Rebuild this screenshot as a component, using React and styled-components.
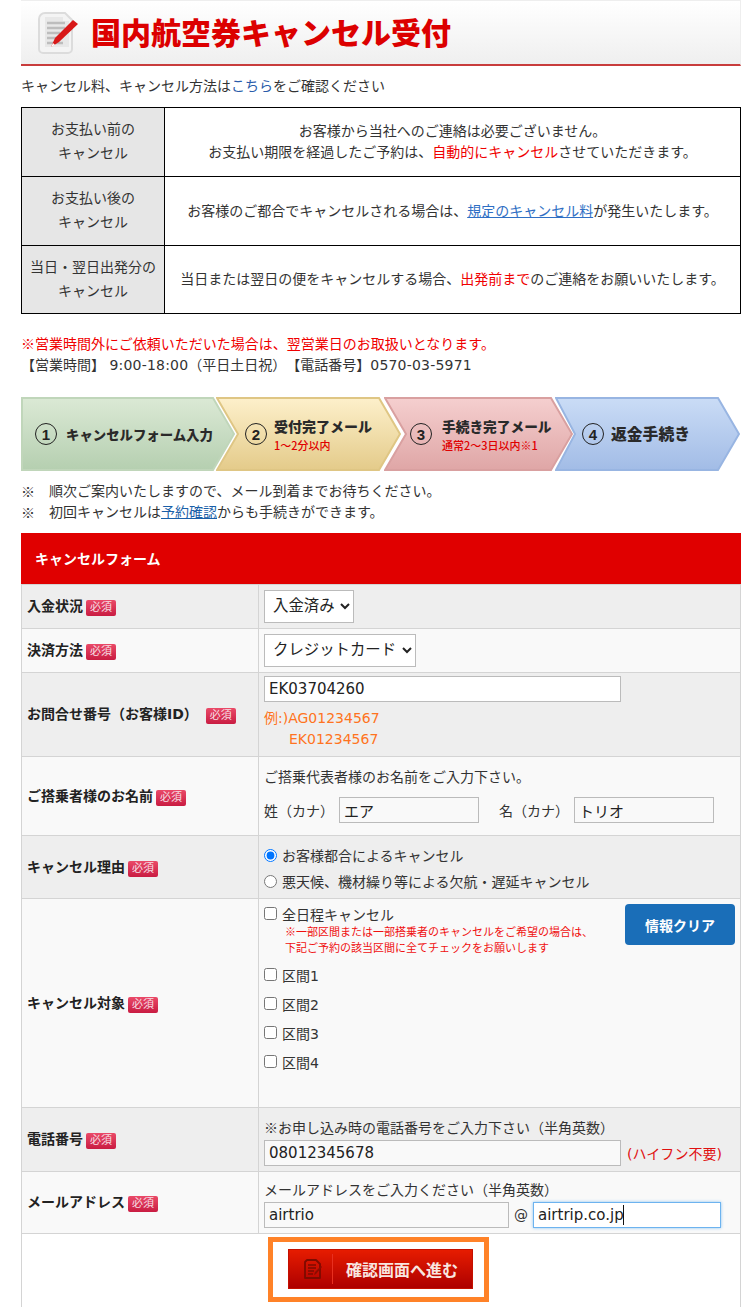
import React, { useEffect, useRef } from 'react';
import styled, { createGlobalStyle } from 'styled-components';

const GlobalStyle = createGlobalStyle`
  html, body {
    margin: 0;
    padding: 0;
    background: #fff;
  }
  body {
    font-family: "DejaVu Sans", "Noto Sans CJK JP", sans-serif;
    font-size: 14px;
    color: #333;
    text-spacing-trim: space-all;
  }
`;

const Page = styled.div`
  width: 720px;
  height: 1307px;
  margin-left: 21px;
  overflow: hidden;
`;

const TitleBar = styled.div`
  display: flex;
  align-items: center;
  height: 63px;
  padding-left: 16px;
  gap: 12px;
  background: linear-gradient(#fff, #efefef);
  border-top: 1px solid #eee;
  border-right: 1px solid #eee;
  border-bottom: 2px solid #c83c3c;
`;

const Title = styled.h1`
  margin: 0 0 4px;
  font-size: 30px;
  line-height: 40px;
  font-weight: 900;
  color: #dc0000;
  font-family: "Noto Sans CJK JP", sans-serif;
`;

const IntroText = styled.p`
  margin: 0;
  height: 41px;
  line-height: 41px;
`;

const Blue = styled.span`
  color: #2a5caa;
`;

const Policy = styled.table`
  width: 720px;
  border-collapse: collapse;
  table-layout: fixed;
  font-family: "DejaVu Sans", "Noto Sans CJK JP", sans-serif;

  td {
    border: 1px solid #000;
    text-align: center;
    padding: 0;
    color: #333;
  }
`;

const PolicyRow = styled.tr`
  height: ${props => props.height}px;
`;

const PolicyLabel = styled.td`
  width: 142px;
  line-height: 24px;
  && {
    background: #e6e6e6;
    padding-bottom: 2px;
  }
`;

const PolicyBody = styled.td`
  line-height: 21px;
`;

const RedText = styled.span`
  color: ${props => props.color || '#f00000'};
`;

const LinkText = styled.span`
  color: ${props => props.color || '#2f6fc4'};
  text-decoration: underline;
`;

const Hours = styled.div`
  margin-top: 19px;
  line-height: 21px;
`;

const Latin = styled.span`
  letter-spacing: 0.2px;
`;

// DejaVu draws this mark too small, the reference has the full-width one
const Mark = styled.span`
  font-family: "Noto Sans CJK JP", sans-serif;
`;

const Steps = styled.div`
  display: flex;
  height: 74px;
  margin-top: 21px;
`;

const StepBox = styled.div`
  position: relative;
  display: flex;
  align-items: center;
  flex: none;
  width: ${props => props.width}px;
  margin-left: ${props => props.overlap || 0}px;
  padding-left: ${props => props.inset}px;
  box-sizing: border-box;

  svg {
    position: absolute;
    left: 0;
    top: 0;
  }
`;

const StepNumber = styled.span`
  position: relative;
  flex: none;
  width: 20px;
  height: 20px;
  border: 1.5px solid #222;
  border-radius: 50%;
  display: flex;
  align-items: center;
  justify-content: center;
  font-size: 15px;
  font-weight: 700;
  color: #222;
  font-family: "Liberation Sans", sans-serif;
`;

const StepText = styled.div`
  position: relative;
  margin-left: ${props => props.gap}px;
  font-family: "Noto Sans CJK JP", sans-serif;
`;

const StepTitle = styled.div`
  font-size: ${props => props.size || 14}px;
  font-weight: 900;
  line-height: 20px;
  color: #2a2a2a;
  white-space: nowrap;
`;

const StepSub = styled.div`
  font-size: 11px;
  font-weight: 500;
  line-height: 16px;
  margin-top: 1px;
  color: #e00000;
  white-space: nowrap;
`;

const Notes = styled.div`
  margin-top: 10px;
`;

const NoteRow = styled.div`
  display: flex;
  height: 21px;
  line-height: 21px;
`;

const NoteMark = styled(Mark)`
  flex: none;
  width: 28px;
`;

const FormHeader = styled.div`
  height: 51px;
  margin-top: 10px;
  padding-left: 14px;
  line-height: 50px;
  background: #e00000;
  color: #fff;
  font-weight: 700;
  font-family: "Noto Sans CJK JP", sans-serif;
`;

const FormTable = styled.table`
  width: 720px;
  border-collapse: collapse;
  table-layout: fixed;
  font-family: "DejaVu Sans", "Noto Sans CJK JP", sans-serif;
`;

const Row = styled.tr`
  background: ${props => props.bg};
  height: ${props => props.height}px;
`;

const LabelCell = styled.th`
  width: 231px;
  padding: 0 0 2px 5px;
  border: 1px solid #d4d4d4;
  text-align: left;
  font-size: 14px;
  font-weight: 700;
  color: #222;
  font-family: "DejaVu Sans", "Noto Sans CJK JP", sans-serif;
`;

const ValueCell = styled.td`
  padding: ${props => props.top || 0}px 0 ${props => props.bottom || 0}px 5px;
  border: 1px solid #d4d4d4;
  font-size: 14px;
  color: #333;
  vertical-align: ${props => props.align || 'middle'};
`;

const Badge = styled.span`
  display: inline-block;
  width: 30px;
  height: 16px;
  margin-left: ${props => props.gap || 3}px;
  border-radius: 2px;
  background: linear-gradient(#ea4a68, #c91c42);
  color: #f6dfe4;
  font-size: 11px;
  font-weight: 400;
  line-height: 16px;
  text-align: center;
  vertical-align: 0;
`;

const Select = styled.select`
  display: block;
  width: ${props => props.width}px;
  height: 33px;
  padding: 0 0 0 4px;
  border: 1px solid #bbb;
  border-radius: 0;
  background: #fff;
  color: #222;
  font-size: 15.4px;
  font-family: "DejaVu Sans", "Noto Sans CJK JP", sans-serif;
`;

const Input = styled.input`
  width: ${props => props.width}px;
  height: 26px;
  padding: 0 4px;
  box-sizing: border-box;
  border: 1px solid #bbb;
  border-radius: 0;
  background: ${props => props.bg || '#fff'};
  color: #222;
  font-size: 15px;
  font-family: "DejaVu Sans", "Noto Sans CJK JP", sans-serif;
  display: block;

  &:focus {
    outline: none;
    border-color: #6db3ef;
    box-shadow: 0 0 3px #8cc4f2;
    caret-color: transparent;
  }
`;

const FocusedField = styled.div`
  position: relative;
`;

const Caret = styled.span`
  position: absolute;
  left: 90px;
  top: 3px;
  width: 1px;
  height: 20px;
  background: #111;
`;

const Example = styled.div`
  margin-top: 6px;
  line-height: 21px;
  color: #ff7320;
`;

const ExampleIndent = styled.div`
  padding-left: 25px;
`;

const CellText = styled.div`
  line-height: 21px;
`;

const NameFields = styled.div`
  display: flex;
  align-items: center;
  margin-top: 9px;
`;

const NameLabel = styled.span`
  width: ${props => props.width}px;
  padding-left: ${props => props.inset || 0}px;
  box-sizing: border-box;
  flex: none;
`;

const ChoiceLine = styled.label`
  display: flex;
  align-items: center;
  height: ${props => props.height || 26}px;
  color: #333;
`;

const Radio = styled.input`
  width: 13px;
  height: 13px;
  margin: 0 5px 0 0;
  flex: none;
`;

const Check = styled(Radio)``;

const TargetLayout = styled.div`
  display: flex;
  justify-content: space-between;
  height: 208px;
  box-sizing: border-box;
  padding: 4px 5px 0 0;
`;

const Caution = styled.div`
  margin: -1px 0 3px 21px;
  font-size: 11px;
  line-height: 16px;
  color: #f01010;
`;

const ClearButton = styled.button`
  width: 110px;
  height: 41px;
  margin-top: 1px;
  border: 0;
  border-radius: 4px;
  background: #1a6eb8;
  color: #fff;
  font-size: 14px;
  font-weight: 700;
  font-family: "Noto Sans CJK JP", sans-serif;
`;

const InputLine = styled.div`
  display: flex;
  align-items: center;
  margin-top: 1px;
`;

const HyphenNote = styled.span`
  margin-left: 6px;
  color: #e01010;
  white-space: nowrap;
`;

const AtMark = styled.span`
  width: 24px;
  text-align: center;
  flex: none;
`;

const SubmitCell = styled.td`
  border: 1px solid #d4d4d4;
  border-bottom: 0;
  padding: 3px 0 0 246px;
  vertical-align: top;
`;

const SubmitFrame = styled.div`
  width: 211px;
  height: 55px;
  box-sizing: content-box;
  border: 5px solid #ff8228;
  display: flex;
  align-items: flex-start;
`;

const SubmitButton = styled.button`
  display: flex;
  align-items: center;
  width: 185px;
  height: 40px;
  margin: 7px 0 0 15px;
  padding: 0 0 0 15px;
  box-sizing: border-box;
  border: 1px solid #c41000;
  background: linear-gradient(#e61c00, #ad0000);
  color: #f8e6e0;
  font-size: 16px;
  font-weight: 700;
  font-family: "Noto Sans CJK JP", sans-serif;
`;

const SubmitDivider = styled.span`
  width: 1px;
  height: 30px;
  margin: 0 13px 0 10px;
  background: #e83020;
`;

const HeaderIcon = () => (
  <svg width="42" height="44" viewBox="0 0 42 44" style={{ flex: 'none' }}>
    <path d="M8 2h20l7 7v29a4 4 0 0 1-4 4H6a4 4 0 0 1-4-4V8a6 6 0 0 1 6-6z" fill="#f4f4f4" stroke="#dcdcdc" strokeWidth="2" />
    <path d="M8 6h18v4h6v26H8z" fill="#e8e8e8" />
    <path d="M10 12h18M10 17h18M10 22h13M10 27h10M10 32h16" stroke="#bdbdbd" strokeWidth="2.4" />
    <path d="M36 9l5 4-19 18-8 5 4-9z" fill="#d81818" />
    <path d="M14 36l2-4 2 2z" fill="#fff" />
  </svg>
);

const SubmitIcon = () => (
  <svg width="18" height="21" viewBox="0 0 18 21" style={{ flex: 'none' }}>
    <path d="M3 1h9l4 4v14H1V3z" fill="none" stroke="#7d0b00" strokeWidth="1.8" strokeLinejoin="round" />
    <path d="M4 6h8M4 9h8M4 12h6M4 15h5" stroke="#7d0b00" strokeWidth="1.5" />
    <path d="M17 7l1 1-6 7-2 1 1-3z" fill="#8c0c00" />
  </svg>
);

const stepShape = (width, notch) =>
  `M1 1 L${width - 22} 1 L${width - 1} 37 L${width - 22} 73 L1 73` +
  (notch ? ` L${notch} 37 Z` : ' Z');

const stepData = [
  { key: 's1', width: 214, overlap: 0, inset: 14, gap: 9, notch: 0, from: '#dbe9d5', to: '#b5cfb0', line: '#c0d6ba', title: 'キャンセルフォーム入力', size: 13.4 },
  { key: 's2', width: 185, overlap: -19, inset: 29, gap: 7, notch: 22, from: '#fdf0cb', to: '#e4cb8a', line: '#dfc684', title: '受付完了メール', sub: '1〜2分以内' },
  { key: 's3', width: 189, overlap: -17, inset: 26, gap: 10, notch: 22, from: '#f5cfcf', to: '#dfa6a6', line: '#d9a0a0', title: '手続き完了メール', sub: '通常2〜3日以内※1', size: 13.7 },
  { key: 's4', width: 185, overlap: -18, inset: 27, gap: 7, notch: 20, from: '#cadcf6', to: '#a2bce6', line: '#98b5e2', title: '返金手続き', size: 15.8 }
];

const Required = ({ gap }) => <Badge gap={gap}>必須</Badge>;

export default function App() {
  const mailDomain = useRef(null);

  useEffect(() => {
    const input = mailDomain.current;
    input.focus();
    input.setSelectionRange(input.value.length, input.value.length);
  }, []);

  return (
    <Page>
      <GlobalStyle />
      <TitleBar>
        <HeaderIcon />
        <Title>国内航空券キャンセル受付</Title>
      </TitleBar>
      <IntroText>
        キャンセル料、キャンセル方法は<Blue>こちら</Blue>をご確認ください
      </IntroText>
      <Policy>
        <tbody>
          <PolicyRow height={69}>
            <PolicyLabel>お支払い前の<br />キャンセル</PolicyLabel>
            <PolicyBody>
              お客様から当社へのご連絡は必要ございません。<br />
              お支払い期限を経過したご予約は、<RedText>自動的にキャンセル</RedText>させていただきます。
            </PolicyBody>
          </PolicyRow>
          <PolicyRow height={69}>
            <PolicyLabel>お支払い後の<br />キャンセル</PolicyLabel>
            <PolicyBody>
              お客様のご都合でキャンセルされる場合は、<LinkText>規定のキャンセル料</LinkText>が発生いたします。
            </PolicyBody>
          </PolicyRow>
          <PolicyRow height={68}>
            <PolicyLabel>当日・翌日出発分の<br />キャンセル</PolicyLabel>
            <PolicyBody>
              当日または翌日の便をキャンセルする場合、<RedText>出発前まで</RedText>のご連絡をお願いいたします。
            </PolicyBody>
          </PolicyRow>
        </tbody>
      </Policy>
      <Hours>
        <RedText><Mark>※</Mark>営業時間外にご依頼いただいた場合は、翌営業日のお取扱いとなります。</RedText>
        <br />
        【営業時間】 <Latin>9:00-18:00</Latin>（平日土日祝）【電話番号】<Latin>0570-03-5971</Latin>
      </Hours>
      <Steps>
        {stepData.map((step, index) => (
          <StepBox key={step.key} width={step.width} overlap={step.overlap} inset={step.inset}>
            <svg width={step.width} height="74">
              <defs>
                <linearGradient id={step.key} x1="0" y1="0" x2="0" y2="1">
                  <stop offset="0" stopColor={step.from} />
                  <stop offset="1" stopColor={step.to} />
                </linearGradient>
              </defs>
              <path
                d={stepShape(step.width, step.notch)}
                fill={`url(#${step.key})`}
                stroke={step.line}
                strokeWidth="2"
              />
            </svg>
            <StepNumber>{index + 1}</StepNumber>
            <StepText gap={step.gap}>
              <StepTitle size={step.size}>{step.title}</StepTitle>
              {step.sub && <StepSub>{step.sub}</StepSub>}
            </StepText>
          </StepBox>
        ))}
      </Steps>
      <Notes>
        <NoteRow>
          <NoteMark>※</NoteMark>
          <span>順次ご案内いたしますので、メール到着までお待ちください。</span>
        </NoteRow>
        <NoteRow>
          <NoteMark>※</NoteMark>
          <span>初回キャンセルは<LinkText color="#1a5fa8">予約確認</LinkText>からも手続きができます。</span>
        </NoteRow>
      </Notes>
      <FormHeader>キャンセルフォーム</FormHeader>
      <FormTable>
        <tbody>
          <Row bg="#eeeeee" height={44}>
            <LabelCell>入金状況<Required /></LabelCell>
            <ValueCell bottom={1}>
              <Select width={90} defaultValue="paid">
                <option value="paid">入金済み</option>
              </Select>
            </ValueCell>
          </Row>
          <Row bg="#f9f9f9" height={44}>
            <LabelCell>決済方法<Required /></LabelCell>
            <ValueCell bottom={1}>
              <Select width={152} defaultValue="card">
                <option value="card">クレジットカード</option>
              </Select>
            </ValueCell>
          </Row>
          <Row bg="#eeeeee" height={84}>
            <LabelCell>お問合せ番号（お客様ID）<Required gap={8} /></LabelCell>
            <ValueCell bottom={3}>
              <Input width={357} defaultValue="EK03704260" />
              <Example>
                例:)AG01234567
                <ExampleIndent>EK01234567</ExampleIndent>
              </Example>
            </ValueCell>
          </Row>
          <Row bg="#f9f9f9" height={79}>
            <LabelCell>ご搭乗者様のお名前<Required /></LabelCell>
            <ValueCell bottom={2}>
              <CellText>ご搭乗代表者様のお名前をご入力下さい。</CellText>
              <NameFields>
                <NameLabel width={75}>姓（カナ）</NameLabel>
                <Input width={140} bg="#f9f9f9" defaultValue="エア" />
                <NameLabel width={95} inset={20}>名（カナ）</NameLabel>
                <Input width={140} bg="#f9f9f9" defaultValue="トリオ" />
              </NameFields>
            </ValueCell>
          </Row>
          <Row bg="#eeeeee" height={63}>
            <LabelCell>キャンセル理由<Required /></LabelCell>
            <ValueCell top={2}>
              <ChoiceLine>
                <Radio type="radio" name="reason" defaultChecked />
                お客様都合によるキャンセル
              </ChoiceLine>
              <ChoiceLine>
                <Radio type="radio" name="reason" />
                悪天候、機材繰り等による欠航・遅延キャンセル
              </ChoiceLine>
            </ValueCell>
          </Row>
          <Row bg="#f9f9f9" height={209}>
            <LabelCell>キャンセル対象<Required /></LabelCell>
            <ValueCell align="top">
              <TargetLayout>
                <div>
                  <ChoiceLine height={21}>
                    <Check type="checkbox" />
                    全日程キャンセル
                  </ChoiceLine>
                  <Caution>
                    <Mark>※</Mark>一部区間または一部搭乗者のキャンセルをご希望の場合は、<br />
                    下記ご予約の該当区間に全てチェックをお願いします
                  </Caution>
                  {['区間1', '区間2', '区間3', '区間4'].map(segment => (
                    <ChoiceLine key={segment} height={29}>
                      <Check type="checkbox" />
                      {segment}
                    </ChoiceLine>
                  ))}
                </div>
                <ClearButton type="button">情報クリア</ClearButton>
              </TargetLayout>
            </ValueCell>
          </Row>
          <Row bg="#eeeeee" height={64}>
            <LabelCell>電話番号<Required /></LabelCell>
            <ValueCell align="top" top={9}>
              <CellText><Mark>※</Mark>お申し込み時の電話番号をご入力下さい（半角英数）</CellText>
              <InputLine>
                <Input width={357} bg="#f9f9f9" defaultValue="08012345678" />
                <HyphenNote>(ハイフン不要)</HyphenNote>
              </InputLine>
            </ValueCell>
          </Row>
          <Row bg="#f9f9f9" height={62}>
            <LabelCell>メールアドレス<Required /></LabelCell>
            <ValueCell align="top" top={8}>
              <CellText>メールアドレスをご入力ください（半角英数）</CellText>
              <InputLine>
                <Input width={245} bg="#f9f9f9" defaultValue="airtrio" />
                <AtMark>@</AtMark>
                <FocusedField>
                  <Input ref={mailDomain} width={188} defaultValue="airtrip.co.jp" />
                  <Caret />
                </FocusedField>
              </InputLine>
            </ValueCell>
          </Row>
          <Row bg="#fff" height={74}>
            <SubmitCell colSpan={2}>
              <SubmitFrame>
                <SubmitButton type="button">
                  <SubmitIcon />
                  <SubmitDivider />
                  確認画面へ進む
                </SubmitButton>
              </SubmitFrame>
            </SubmitCell>
          </Row>
        </tbody>
      </FormTable>
    </Page>
  );
}
